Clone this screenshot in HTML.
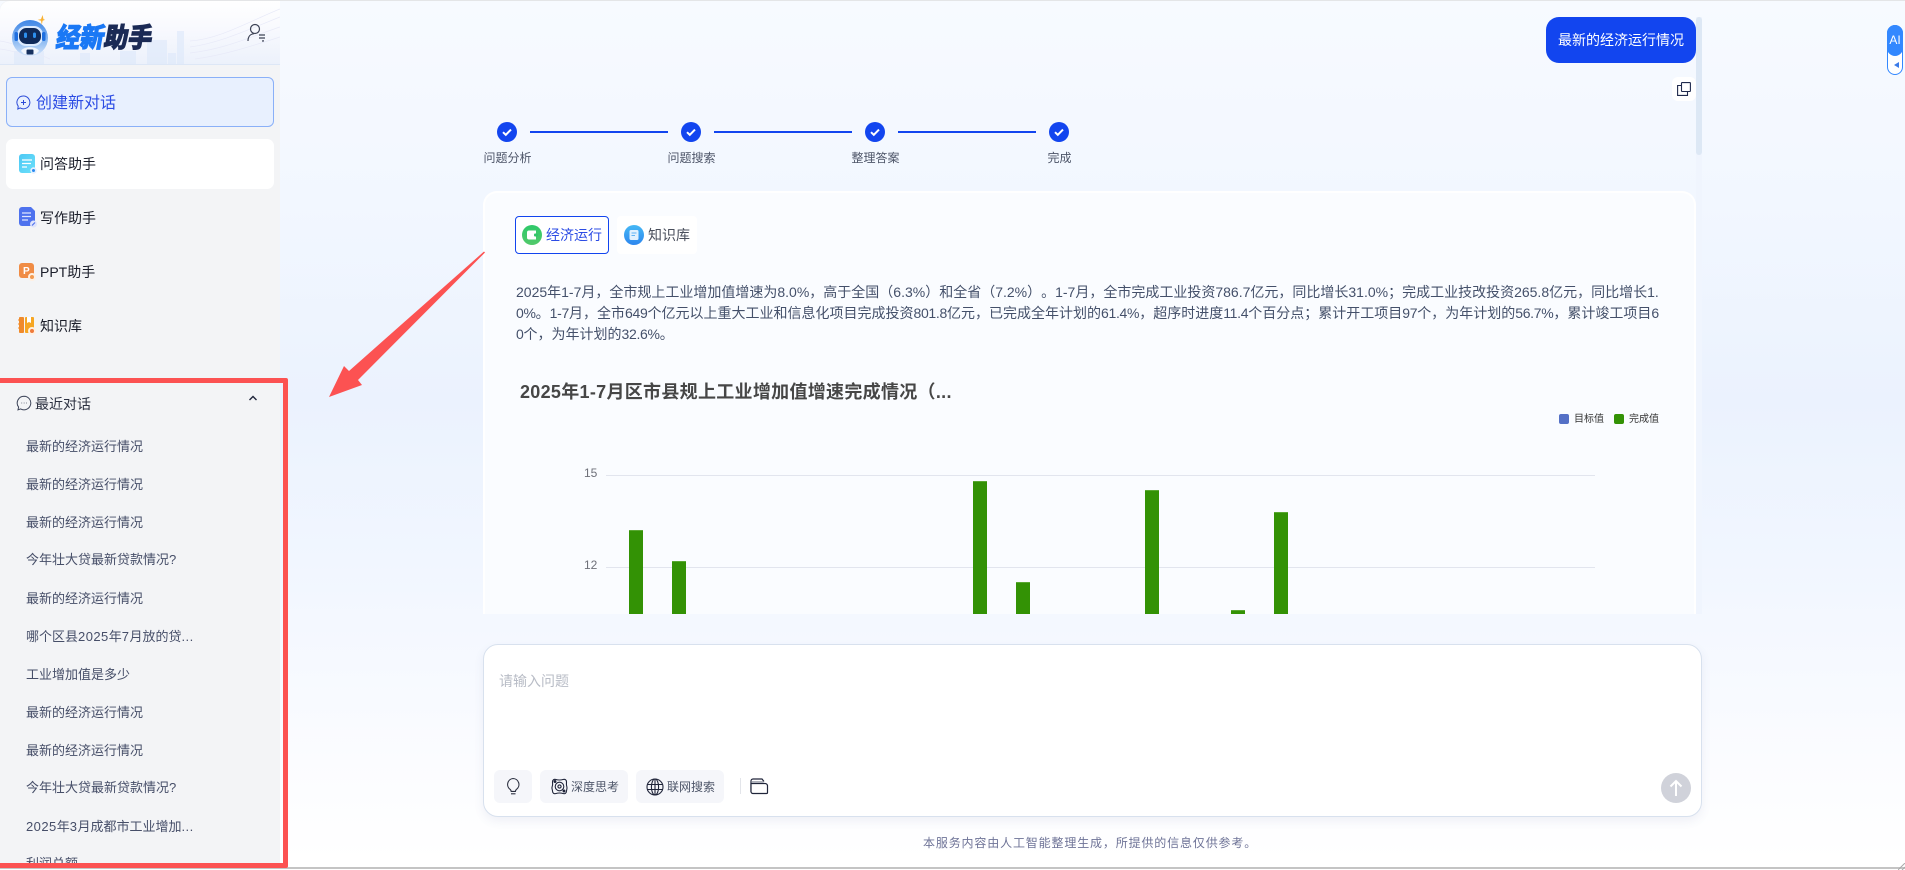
<!DOCTYPE html>
<html lang="zh"><head><meta charset="utf-8"><title>经新助手</title>
<style>
*{box-sizing:border-box;margin:0;padding:0}
html,body{width:1905px;height:870px;overflow:hidden;background:#fff}
body{position:relative;font-family:"Liberation Sans","Noto Sans CJK SC",sans-serif;color:#333;text-spacing-trim:space-all}
.a{position:absolute;white-space:nowrap}
#bg{left:0;top:0;width:1905px;height:869px;border-top:1px solid #e4e5e7;border-bottom:2px solid #c4c4c4;background:linear-gradient(180deg,#f7faff 0,#f2f7ff 200px,#ebf2fe 400px,#f1f6ff 560px,#fbfcff 760px,#fff 860px);overflow:hidden}
#side{left:0;top:1px;width:280px;height:867px;background:#f3f4f6;border-top-left-radius:8px}
#hd{left:0;top:1px;width:280px;height:64px;border-top-left-radius:10px;border-bottom:1px solid #dde7f6;background:linear-gradient(180deg,#fff 0,#f8f9fe 45%,#ecf1fb 100%);overflow:hidden}
.nav{left:40px;font-size:14px;line-height:20px;color:#1a1d29}
.hist{left:26px;font-size:13px;line-height:20px;color:#464e68}
.hist i{font-style:normal;letter-spacing:.45px}
.lab{font-size:12px;line-height:16px;color:#4d5568;transform:translateX(-50%)}
.chk{width:20px;height:20px}
.ln{height:2px;width:138px;background:#1245ef;top:131px}
.bar{width:14px;background:#339205;border-top:1px solid #5aa833}
.grid{left:606px;width:989px;height:1px;background:#e2e5ee}
.btn{top:770px;height:33px;background:#f5f6fa;border-radius:6px}
.bt{top:779px;font-size:12px;line-height:16px;color:#4d5568}
.para i{font-style:normal;letter-spacing:-.3px}
</style></head><body>
<div id="bg" class="a"></div>
<div id="side" class="a"></div>
<div id="hd" class="a">
<svg width="280" height="64" style="position:absolute;left:0;top:0">
<g fill="#dce8fb" opacity=".6"><rect x="177" y="30" width="7" height="34"/><rect x="147" y="39" width="20" height="25"/><rect x="120" y="50" width="16" height="14"/><rect x="80" y="52" width="10" height="12"/><rect x="168" y="52" width="8" height="12"/><rect x="14" y="50" width="30" height="14"/></g>
<g fill="none" stroke="#e8eaf8" stroke-width=".7"><path d="M190 40C220 38 250 20 280 8"/><path d="M190 46C220 42 250 28 280 16"/><path d="M190 52C225 48 250 36 280 26"/><path d="M195 58C225 54 255 44 280 36"/><path d="M0 40C15 42 30 50 50 58"/><path d="M0 48C15 50 25 54 40 60"/></g>
</svg>
</div>
<svg class="a" style="left:10px;top:14px" width="44" height="42" viewBox="0 0 44 42">
<defs><linearGradient id="rb" x1="0" y1="0" x2="0" y2="1"><stop offset="0" stop-color="#3f86e6"/><stop offset=".6" stop-color="#8fbcf2"/><stop offset="1" stop-color="#d5e5fa"/></linearGradient></defs>
<circle cx="20" cy="24" r="18" fill="url(#rb)"/>
<rect x="7" y="12" width="26" height="20" rx="9" fill="#dcebff"/>
<rect x="9" y="14" width="22" height="16" rx="7.500" fill="#0f2a5a"/>
<rect x="4.500" y="18" width="3.500" height="9" rx="1.500" fill="#1f6fe0"/><rect x="32" y="18" width="3.500" height="9" rx="1.500" fill="#1f6fe0"/>
<rect x="14" y="18.500" width="3" height="5.500" rx="1.500" fill="#2d8fee"/><rect x="23" y="18.500" width="3" height="5.500" rx="1.500" fill="#2d8fee"/>
<path d="M11 37c2-5 16-5 18 0l-3 3H14z" fill="#f1f6fd"/><rect x="16.500" y="35.500" width="7" height="5" rx="1" fill="#16305e"/>
<path d="M41 0l1 5 2 1-3 1-1 5-1-5-4-1 4-1z" fill="#f9b233" transform="translate(-1 1) scale(.82)"/>
</svg>
<div class="a" style="left:57px;top:18px;font-size:24px;line-height:36px;font-weight:900;font-family:'Noto Sans CJK SC',sans-serif;transform:skewX(-10deg) scaleY(1.12);color:#1a78f5;-webkit-text-stroke:.9px currentColor">经新<span style="color:#1b2a55">助手</span></div>
<svg class="a" style="left:247px;top:23px" width="20" height="20" viewBox="0 0 20 20" fill="none" stroke="#3d4356" stroke-width="1.200"><circle cx="8" cy="6" r="4.500"/><path d="M1 18c0-4.500 2.500-7 6-7.300"/><path d="M12 12h6M12 15h6" stroke-width="1.300"/><path d="M15 18l2-.1"/></svg>

<div class="a" style="left:6px;top:77px;width:268px;height:50px;background:#e8f0fe;border:1px solid #8ab0f8;border-radius:6px"></div>
<svg class="a" style="left:16px;top:95px" width="15" height="15" viewBox="0 0 15 15" fill="none" stroke="#2c4cd8" stroke-width="1"><path d="M7.500 1a6.400 6.400 0 1 1-3.300 11.900L1.800 14l.4-2.800A6.400 6.400 0 0 1 7.500 1z"/><path d="M7.500 5v5M5 7.500h5"/></svg>
<div class="a" style="left:36px;top:93px;font-size:16px;line-height:22px;color:#2c4ce4">创建新对话</div>

<div class="a" style="left:6px;top:139px;width:268px;height:50px;background:#fff;border-radius:7px"></div>
<svg class="a" style="left:19px;top:154px" width="18" height="20" viewBox="0 0 18 20"><defs><linearGradient id="q" x1="0" y1="0" x2="1" y2="1"><stop offset="0" stop-color="#4cc8f4"/><stop offset="1" stop-color="#6de0fa"/></linearGradient></defs><rect width="16" height="19" rx="3" fill="url(#q)"/><path d="M3 6h10M3 9.500h9M3 13h5" stroke="#fff" stroke-width="1.300"/><circle cx="14.500" cy="16.500" r="3.200" fill="#e4f0ff"/><circle cx="14.500" cy="16.500" r="1.500" fill="#2a8af0"/></svg>
<div class="a nav" style="top:154px">问答助手</div>
<svg class="a" style="left:19px;top:207px" width="18" height="21" viewBox="0 0 18 21"><path d="M3 0h9l4 4v15H3a3 3 0 0 1-3-3V3a3 3 0 0 1 3-3z" fill="#4e72ee"/><path d="M3 6h9M3 9.500h9M3 13h6" stroke="#dfe6ff" stroke-width="1.300"/><circle cx="14.500" cy="17" r="3.500" fill="#dfe4fb"/><path d="M13 18.500l3-3" stroke="#4e72ee" stroke-width="1.200"/></svg>
<div class="a nav" style="top:208px">写作助手</div>
<svg class="a" style="left:18px;top:263px" width="19" height="19" viewBox="0 0 19 19"><rect x="1" y="0" width="15" height="15" rx="3" fill="#f08c45"/><text x="5" y="11" font-size="10" font-weight="700" fill="#fff" font-family="Liberation Sans">P</text><circle cx="14" cy="14" r="4" fill="#fff0e2"/><circle cx="14" cy="14" r="2" fill="#f29a50"/></svg>
<div class="a nav" style="top:262px">PPT助手</div>
<svg class="a" style="left:18px;top:317px" width="19" height="19" viewBox="0 0 19 19"><rect x="1" y="0" width="5" height="16" rx="1" fill="#f08a2a"/><rect x="7" y="0" width="9" height="16" rx="1" fill="#f6a623"/><path d="M1 3H0M1 7H0M1 11H0" stroke="#f08a2a"/><path d="M9 0v6l2-1 2 1V0z" fill="#fff"/><circle cx="14" cy="14" r="4" fill="#fff0e2"/><circle cx="14" cy="14" r="2" fill="#ef7a3a"/></svg>
<div class="a nav" style="top:316px">知识库</div>

<svg class="a" style="left:16px;top:395px" width="16" height="16" viewBox="0 0 16 16" fill="none" stroke="#3c4358" stroke-width="1"><path d="M8 1.200a6.800 6.800 0 1 1-3.400 12.700L2 14.800l.6-2.700A6.800 6.800 0 0 1 8 1.200z"/><path d="M5.500 8h.6M7.800 8h.6M10 8h.6" stroke-width="1.100"/></svg>
<div class="a" style="left:35px;top:394px;font-size:14px;line-height:20px;color:#2b3040">最近对话</div>
<svg class="a" style="left:248px;top:394px" width="10" height="8" viewBox="0 0 10 8" fill="none" stroke="#20253a" stroke-width="1.400"><path d="M1.500 6L5 2.500 8.500 6"/></svg>
<div class="a hist" style="top:437px">最新的经济运行情况</div>
<div class="a hist" style="top:475px">最新的经济运行情况</div>
<div class="a hist" style="top:513px">最新的经济运行情况</div>
<div class="a hist" style="top:550px">今年壮大贷最新贷款情况?</div>
<div class="a hist" style="top:589px">最新的经济运行情况</div>
<div class="a hist" style="top:627px">哪个区县<i>2025</i>年<i>7</i>月放的贷<i>...</i></div>
<div class="a hist" style="top:665px">工业增加值是多少</div>
<div class="a hist" style="top:703px">最新的经济运行情况</div>
<div class="a hist" style="top:741px">最新的经济运行情况</div>
<div class="a hist" style="top:778px">今年壮大贷最新贷款情况?</div>
<div class="a hist" style="top:817px"><i>2025</i>年<i>3</i>月成都市工业增加<i>...</i></div>
<div class="a" style="left:0;top:854px;width:280px;height:9px;overflow:hidden"><div class="a hist" style="top:0">利润总额</div></div>
<div class="a" style="left:-6px;top:378px;width:294px;height:490px;border:5px solid #fc5252;border-radius:2px"></div>

<!-- chat scroll -->
<div class="a" style="left:1696px;top:17px;width:6px;height:597px;background:#f0f5fe"></div>
<div class="a" style="left:1696px;top:17px;width:6px;height:138px;background:#dde8f5;border-radius:3px"></div>
<div class="a" style="left:1546px;top:17px;width:150px;height:46px;background:#1245ef;border-radius:13px;color:#fff;font-size:14px;line-height:46px;text-align:center">最新的经济运行情况</div>
<div class="a" style="left:1672px;top:77px;width:24px;height:24px;background:#fff;border-radius:6px"></div>
<svg class="a" style="left:1677px;top:82px" width="14" height="14" viewBox="0 0 14 14" fill="none" stroke="#1f2a4d" stroke-width="1.100"><rect x="4.500" y=".6" width="8.900" height="8.900" rx=".6"/><path d="M4 3.500H.6V13.400H10.500V10"/></svg>

<!-- stepper -->
<svg class="a chk" style="left:497px;top:122px" viewBox="0 0 20 20"><circle cx="10" cy="10" r="10" fill="#1245ef"/><path d="M6 10.200l2.800 2.600L14 7.600" fill="none" stroke="#fff" stroke-width="2"/></svg>
<svg class="a chk" style="left:681px;top:122px" viewBox="0 0 20 20"><circle cx="10" cy="10" r="10" fill="#1245ef"/><path d="M6 10.200l2.800 2.600L14 7.600" fill="none" stroke="#fff" stroke-width="2"/></svg>
<svg class="a chk" style="left:865px;top:122px" viewBox="0 0 20 20"><circle cx="10" cy="10" r="10" fill="#1245ef"/><path d="M6 10.200l2.800 2.600L14 7.600" fill="none" stroke="#fff" stroke-width="2"/></svg>
<svg class="a chk" style="left:1049px;top:122px" viewBox="0 0 20 20"><circle cx="10" cy="10" r="10" fill="#1245ef"/><path d="M6 10.200l2.800 2.600L14 7.600" fill="none" stroke="#fff" stroke-width="2"/></svg>
<div class="a ln" style="left:530px"></div><div class="a ln" style="left:714px"></div><div class="a ln" style="left:898px"></div>
<div class="a lab" style="left:507.500px;top:150px">问题分析</div>
<div class="a lab" style="left:691.500px;top:150px">问题搜索</div>
<div class="a lab" style="left:875.500px;top:150px">整理答案</div>
<div class="a lab" style="left:1059.500px;top:150px">完成</div>

<!-- card -->
<div class="a" style="left:483px;top:191px;width:1213px;height:423px;background:#fafcff;border:2px solid #fff;border-bottom:0;border-radius:14px 14px 0 0;overflow:hidden"></div>
<div class="a" style="left:515px;top:216px;width:94px;height:38px;background:#fff;border:1px solid #1245ef;border-radius:4px"></div>
<svg class="a" style="left:522px;top:225px" width="20" height="20" viewBox="0 0 20 20"><defs><linearGradient id="g1" x1="0" y1="0" x2="0" y2="1"><stop offset="0" stop-color="#2ec96a"/><stop offset="1" stop-color="#52c96a"/></linearGradient></defs><circle cx="10" cy="10" r="10" fill="url(#g1)"/><path d="M5 7.500a2 2 0 0 1 2-2h7v9H7a2 2 0 0 1-2-2z" fill="#fff"/><rect x="12" y="8.500" width="4" height="3" rx="1" fill="#33c46a"/></svg>
<div class="a" style="left:546px;top:225px;font-size:14px;line-height:20px;color:#2c4ce4">经济运行</div>
<div class="a" style="left:617px;top:216px;width:80px;height:38px;background:#fff;border-radius:4px"></div>
<svg class="a" style="left:624px;top:225px" width="20" height="20" viewBox="0 0 20 20"><defs><linearGradient id="g2" x1="0" y1="0" x2="0" y2="1"><stop offset="0" stop-color="#45b8f5"/><stop offset="1" stop-color="#2d86ee"/></linearGradient></defs><circle cx="10" cy="10" r="10" fill="url(#g2)"/><rect x="5.500" y="5" width="9" height="10" rx="1.500" fill="#e2f1fe"/><path d="M7.500 8h5M7.500 10.500h3.500" stroke="#62b4f4" stroke-width="1.100"/></svg>
<div class="a" style="left:648px;top:225px;font-size:14px;line-height:20px;color:#4a4f5c">知识库</div>

<div class="a para" style="left:516px;top:282px;font-size:14px;line-height:21px;color:#44506a"><span style="letter-spacing:0">2025年1-7月，全市规上工业增加值增速为8.0%，高于全国（6.3%）和全省（7.2%）。1-7月，全市完成工业投资786.7亿元，同比增长31.0%；完成工业技改投资265.8亿元，同比增长1.</span><br><i>0%</i>。<i>1-7</i>月，全市<i>649</i>个亿元以上重大工业和信息化项目完成投资<i>801.8</i>亿元，已完成全年计划的<i>61.4%</i>，超序时进度<i>11.4</i>个百分点；累计开工项目<i>97</i>个，为年计划的<i>56.7%</i>，累计竣工项目<i>6</i><br><i>0</i>个，为年计划的<i>32.6%</i>。</div>

<div class="a" style="left:520px;top:379px;font-size:18px;line-height:26px;font-weight:700;color:#464646;letter-spacing:.3px">2025年1-7月区市县规上工业增加值增速完成情况（...</div>
<div class="a" style="left:1559px;top:414px;width:10px;height:10px;background:#5470c6;border-radius:2px"></div>
<div class="a" style="left:1574px;top:413px;font-size:10px;line-height:14px;color:#333">目标值</div>
<div class="a" style="left:1614px;top:414px;width:10px;height:10px;background:#339205;border-radius:2px"></div>
<div class="a" style="left:1629px;top:413px;font-size:10px;line-height:14px;color:#333">完成值</div>

<div class="a grid" style="top:475px"></div>
<div class="a grid" style="top:567px"></div>
<div class="a" style="left:584px;top:465px;font-size:12px;line-height:16px;color:#6e7079">15</div>
<div class="a" style="left:584px;top:557px;font-size:12px;line-height:16px;color:#6e7079">12</div>
<div class="a bar" style="left:629px;top:530px;height:84px"></div>
<div class="a bar" style="left:672px;top:561px;height:53px"></div>
<div class="a bar" style="left:973px;top:481px;height:133px"></div>
<div class="a bar" style="left:1016px;top:582px;height:32px"></div>
<div class="a bar" style="left:1145px;top:490px;height:124px"></div>
<div class="a bar" style="left:1231px;top:610px;height:4px"></div>
<div class="a bar" style="left:1274px;top:512px;height:102px"></div>

<!-- arrow -->
<svg class="a" style="left:320px;top:245px" width="175" height="160" viewBox="320 245 175 160"><path d="M485 252.500L358 380l4 5-33 12 15-31 5 5L484 251.500z" fill="#fc5252"/></svg>

<!-- input -->
<div class="a" style="left:483px;top:644px;width:1219px;height:173px;background:#fff;border:1px solid #d8e1ee;border-radius:15px;box-shadow:0 4px 10px rgba(60,80,140,.08)"></div>
<div class="a" style="left:499px;top:671px;font-size:14px;line-height:20px;color:#b8bcc6">请输入问题</div>
<div class="a btn" style="left:494px;width:38px"></div>
<svg class="a" style="left:505px;top:777px" width="16" height="19" viewBox="0 0 16 19" fill="none" stroke="#2a2f3f" stroke-width="1.100"><path d="M8 1.500a6 6 0 0 1 3.400 10.900c-.6.500-.9 1-1 2H6.200c-.1-1-.4-1.500-1-2A6 6 0 0 1 8 1.500z"/><path d="M6 16.800h4.500"/></svg>
<div class="a btn" style="left:540px;width:88px"></div>
<svg class="a" style="left:551px;top:778px" width="17" height="17" viewBox="0 0 17 17" fill="none" stroke="#20253a" stroke-width="1.100"><path d="M5 1.500C3 .800 1.500 2 1.500 4c0 1.500.5 2.500-.3 4.500s.3 3 .3 4.500c0 2 1.500 3.200 3.500 2.500 1.500-.5 2.500-.5 3.500-.5s2 0 3.500.5c2 .7 3.500-.5 3.500-2.500 0-1.500 1-2.500.3-4.500S15.500 5.500 15.500 4c0-2-1.500-3.200-3.500-2.500-1.500.5-2.500.5-3.500.5S6.500 2 5 1.500z"/><circle cx="8.500" cy="8.500" r="4.300"/><circle cx="8.500" cy="8.500" r="1.600"/><circle cx="4" cy="3.500" r=".9" fill="#20253a"/><circle cx="13" cy="13" r=".9" fill="#20253a"/></svg>
<div class="a bt" style="left:571px">深度思考</div>
<div class="a btn" style="left:636px;width:88px"></div>
<svg class="a" style="left:646px;top:778px" width="18" height="18" viewBox="0 0 18 18" fill="none" stroke="#20253a" stroke-width="1.100"><circle cx="9" cy="9" r="8"/><ellipse cx="9" cy="9" rx="3.600" ry="8"/><path d="M1.500 6.500h15M1.500 11.500h15M9 1v16"/></svg>
<div class="a bt" style="left:667px">联网搜索</div>
<div class="a" style="left:740px;top:778px;width:1px;height:16px;background:#e3e5ea"></div>
<svg class="a" style="left:750px;top:777px" width="19" height="18" viewBox="0 0 19 18" fill="none" stroke="#20253a" stroke-width="1.200"><path d="M1 15V4a2 2 0 0 1 2-2h9l2 2.500"/><path d="M1 6.500h14a2.500 2.500 0 0 1 2.500 2.500v6.500a1 1 0 0 1-1 1H3a2 2 0 0 1-2-2z" fill="#fff"/><path d="M2 4h11l1 2H2z" fill="#aeb1ba" stroke="none"/></svg>
<div class="a" style="left:1661px;top:773px;width:30px;height:30px;background:#d0d2da;border-radius:50%"></div>
<svg class="a" style="left:1668px;top:779px" width="16" height="18" viewBox="0 0 16 18" fill="none" stroke="#fff" stroke-width="2"><path d="M8 17V2M2.500 7.500L8 2l5.500 5.500"/></svg>

<div class="a" style="left:923px;top:835px;font-size:12px;line-height:16px;color:#6e7397;letter-spacing:.85px">本服务内容由人工智能整理生成，所提供的信息仅供参考。</div>

<!-- AI widget -->
<div class="a" style="left:1887px;top:25px;width:16px;height:50px;background:#fff;border:1px solid #3388ff;border-radius:8px"></div>
<div class="a" style="left:1887px;top:25px;width:16px;height:31px;background:#3388ff;border-radius:8px;color:#fff;font-size:12px;line-height:30px;text-align:center">AI</div>
<div class="a" style="left:1894px;top:62px;width:0;height:0;border-top:3.500px solid transparent;border-bottom:3.500px solid transparent;border-right:5px solid #3b7be8"></div>
<svg class="a" style="left:1898px;top:863px" width="7" height="7" viewBox="0 0 7 7"><path d="M0 7L7 0M4 7L7 4" stroke="#aaa" stroke-width="1"/></svg>
</body></html>
